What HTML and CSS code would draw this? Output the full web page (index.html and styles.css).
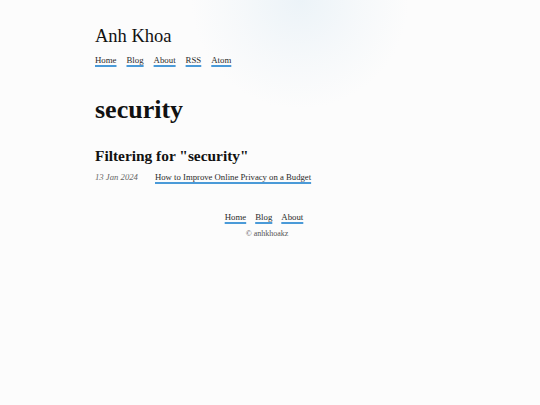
FILE: index.html
```html
<!DOCTYPE html>
<html lang="en">
<head>
<meta charset="utf-8">
<title>security</title>
<link rel="stylesheet" href="styles.css">
</head>
<body>
<div class="glow"></div>
<div class="page">
  <header class="site-header">
    <div class="site-title">Anh Khoa</div>
    <nav class="nav">
      <a href="#">Home</a>
      <a href="#">Blog</a>
      <a href="#">About</a>
      <a href="#">RSS</a>
      <a href="#">Atom</a>
    </nav>
  </header>
  <main class="content">
    <h1 class="tag-title">security</h1>
    <h2 class="filter-title">Filtering for "security"</h2>
    <ul class="posts">
      <li class="post"><span class="date">13 Jan 2024</span><a href="#">How to Improve Online Privacy on a Budget</a></li>
    </ul>
  </main>
  <footer class="footer">
    <nav class="footer-nav">
      <a href="#">Home</a>
      <a href="#">Blog</a>
      <a href="#">About</a>
    </nav>
    <div class="copy">© anhkhoakz</div>
  </footer>
</div>
</body>
</html>
```
FILE: styles.css
```css
html, body {
  margin: 0;
  padding: 0;
}
body {
  background: #fcfcfc;
  color: #222;
  font-family: "Liberation Serif", "DejaVu Serif", serif;
  min-height: 405px;
  position: relative;
  overflow: hidden;
}
.glow {
  position: absolute;
  left: 190px;
  top: -110px;
  width: 220px;
  height: 220px;
  border-radius: 50%;
  background: radial-gradient(circle at center, rgba(232,241,247,0.8) 0%, rgba(240,245,249,0.5) 40%, rgba(252,252,252,0) 70%);
  pointer-events: none;
}
.page {
  position: relative;
  width: 350px;
  margin: 0 auto;
  padding-top: 24px;
}
.site-title {
  font-size: 18.5px;
  line-height: 24px;
  color: #111;
}
.nav {
  display: flex;
  gap: 10px;
  margin-top: 6px;
}
a {
  color: #2a2a2a;
  text-decoration: underline;
  text-decoration-color: #4a9ad8;
  text-decoration-thickness: 1.5px;
  text-underline-offset: 2px;
}
.nav a, .footer-nav a {
  font-size: 8.8px;
  line-height: 12px;
}
.content {
  margin-top: 29px;
}
.tag-title {
  font-size: 26px;
  line-height: 30px;
  margin: 0;
  color: #111;
}
.filter-title {
  font-size: 15.4px;
  line-height: 18px;
  margin: 22px 0 0;
  color: #111;
}
.posts {
  list-style: none;
  margin: 6px 0 0;
  padding: 0;
}
.post {
  display: flex;
  font-size: 8.7px;
  line-height: 12px;
}
.date {
  width: 60px;
  font-style: italic;
  color: #666;
}
.footer {
  margin-top: 28px;
  text-align: center;
}
.footer-nav {
  display: flex;
  justify-content: center;
  gap: 9px;
  padding-right: 12px;
}
.copy {
  font-size: 8px;
  line-height: 10px;
  color: #555;
  margin-top: 6px;
  padding-right: 6px;
}
```
